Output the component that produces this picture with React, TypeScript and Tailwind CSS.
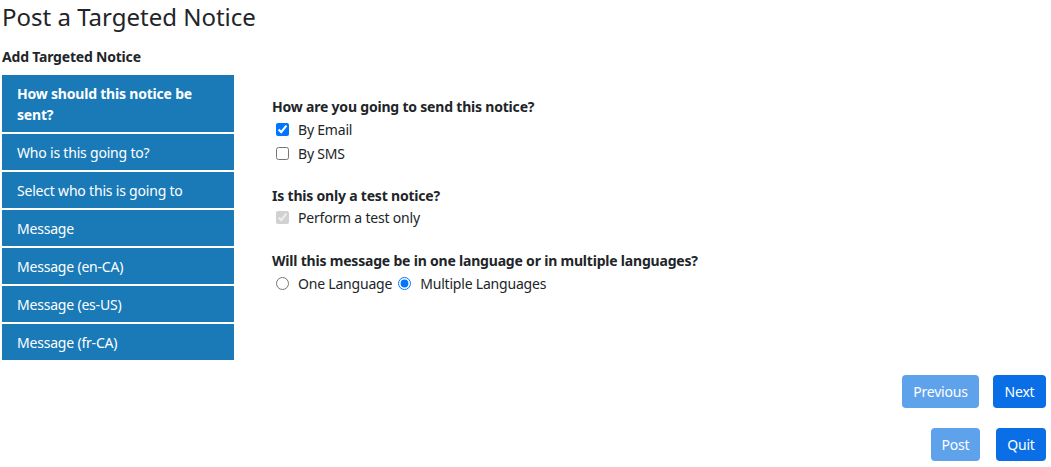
import React, { useState } from "react";

const steps = [
  "How should this notice be sent?",
  "Who is this going to?",
  "Select who this is going to",
  "Message",
  "Message (en-CA)",
  "Message (es-US)",
  "Message (fr-CA)",
];

export default function App() {
  const [email, setEmail] = useState(true);
  const [sms, setSms] = useState(false);
  const [lang, setLang] = useState("multi");

  return (
    <div className="min-h-screen bg-white pl-[2px] text-[14px] tracking-[-0.2px] text-[#212529] [font-family:'Noto_Sans',sans-serif]">
      <h3 className="h-[33px] text-[24px] leading-[33px] tracking-normal">Post a Targeted Notice</h3>
      <div className="mt-[14px] h-[28px] text-[14px] font-bold leading-[20px]">Add Targeted Notice</div>

      <div className="flex">
        <div className="flex w-[232px] flex-col gap-[2px]">
          {steps.map((s, i) => (
            <div
              key={s}
              className={
                "bg-[#1a7ab8] px-[15px] py-[7.5px] leading-[21px] text-white " +
                (i === 0 ? "font-bold" : "")
              }
            >
              {s}
            </div>
          ))}
        </div>

        <div className="ml-[38px] pt-[21px]">
          <div className="font-bold leading-[21px]">How are you going to send this notice?</div>
          <label className="flex h-[24px] items-center gap-[9px] pl-[4px]">
            <input type="checkbox" checked={email} onChange={() => setEmail(!email)} className="m-0 size-[13px]" />
            By Email
          </label>
          <label className="flex h-[24px] items-center gap-[9px] pl-[4px]">
            <input type="checkbox" checked={sms} onChange={() => setSms(!sms)} className="m-0 size-[13px]" />
            By SMS
          </label>

          <div className="mt-[20px] font-bold leading-[21px]">Is this only a test notice?</div>
          <label className="flex h-[22px] items-center gap-[9px] pl-[4px]">
            <input type="checkbox" checked disabled readOnly className="m-0 size-[13px]" />
            Perform a test only
          </label>

          <div className="mt-[22px] font-bold leading-[21px]">
            Will this message be in one language or in multiple languages?
          </div>
          <div className="flex h-[24px] items-center pl-[4px]">
            <label className="flex items-center gap-[9px]">
              <input
                type="radio"
                name="lang"
                checked={lang === "one"}
                onChange={() => setLang("one")}
                className="m-0 size-[13px]"
              />
              One Language
            </label>
            <label className="ml-[6px] flex items-center gap-[9px]">
              <input
                type="radio"
                name="lang"
                checked={lang === "multi"}
                onChange={() => setLang("multi")}
                className="m-0 size-[13px]"
              />
              Multiple Languages
            </label>
          </div>
        </div>
      </div>

      <div className="mt-[15px] flex flex-col items-end gap-[20px] pr-[5px]">
        <div className="flex gap-[14px]">
          <button className="h-[33px] w-[77px] rounded-[4px] bg-[#5ea2ec] text-white">Previous</button>
          <button className="h-[33px] w-[53px] rounded-[4px] bg-[#0a6fe6] text-white">Next</button>
        </div>
        <div className="flex gap-[16px]">
          <button className="h-[33px] w-[49px] rounded-[4px] bg-[#5ea2ec] text-white">Post</button>
          <button className="h-[33px] w-[50px] rounded-[4px] bg-[#0a6fe6] text-white">Quit</button>
        </div>
      </div>
    </div>
  );
}
